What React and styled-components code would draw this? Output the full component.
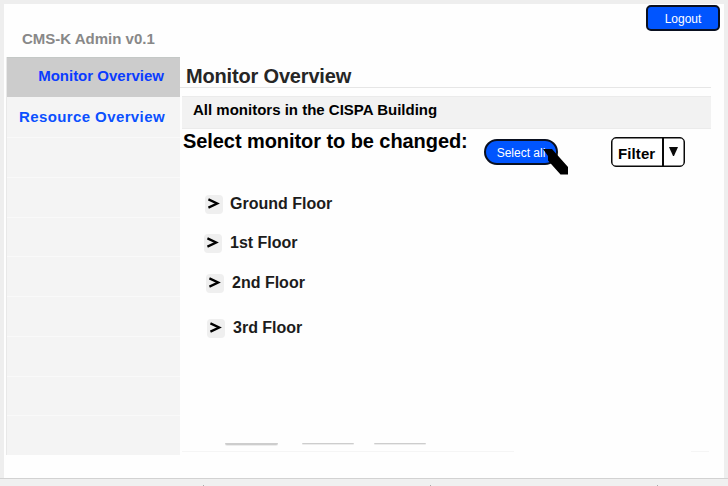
import React from "react";
import styled, { createGlobalStyle } from "styled-components";

const GlobalStyle = createGlobalStyle`
  * { box-sizing: border-box; }
  body { margin: 0; background: #eeeeee; font-family: "Liberation Sans", Arial, sans-serif; }
`;

const Page = styled.div`
  width: 728px;
  height: 486px;
  padding-top: 4px;
  display: flex;
  flex-direction: column;
  overflow: hidden;
  background: #eeeeee;
`;

const Window = styled.div`
  margin: 0 4px;
  height: 474px;
  background: #fefefe;
`;

const Header = styled.header`
  height: 53px;
  display: flex;
  justify-content: space-between;
  align-items: flex-start;
  padding: 0 4px 0 18px;
`;

const AppName = styled.div`
  margin-top: 25px;
  font-weight: bold;
  font-size: 15px;
  line-height: 20px;
  color: #888888;
`;

const Button = styled.button`
  width: 74px;
  height: 26px;
  padding: 2px 0 0;
  border: 2px solid #0a1020;
  border-radius: ${(p) => (p.$pill ? "13px" : "5px")};
  background: #0055ff;
  color: #ffffff;
  font: 12px/20px "Liberation Sans", Arial, sans-serif;
  white-space: nowrap;
`;

const LogoutButton = styled(Button)`
  margin-top: 1px;
`;

const Body = styled.div`
  display: flex;
  padding-left: 2px;
`;

const Sidebar = styled.nav`
  width: 174px;
  height: 398px;
  display: grid;
  grid-template-rows: 40px 40px repeat(8, 1fr);
  background: #f4f4f4;
  border-left: 1px solid #e8e8e8;
`;

const NavItem = styled.div`
  padding-right: ${(p) => (p.$active ? 16 : 15)}px;
  text-align: right;
  font-weight: bold;
  font-size: 15px;
  line-height: ${(p) => (p.$active ? "36px" : "40px")};
  letter-spacing: ${(p) => (p.$active ? "0" : "0.4px")};
  color: ${(p) => (p.$active ? "#0a3cff" : "#0a50ff")};
  background: ${(p) => (p.$active ? "#cccccc" : "transparent")};
  border-top: ${(p) => (p.$active ? "1px solid #c4c8c6" : "0")};
`;

const EmptyItem = styled.div`
  border-top: 1px solid #f9f9f9;
`;

const Main = styled.main`
  flex: 1;
  height: 398px;
  display: flex;
  flex-direction: column;
`;

const Title = styled.h1`
  margin: 0 13px 0 0;
  height: 31px;
  padding: 4px 0 0 6px;
  border-bottom: 1px solid #e6e6e6;
  font-size: 20px;
  line-height: 30px;
  letter-spacing: -0.17px;
  color: #262626;
`;

const Banner = styled.div`
  margin: 8px 13px 0 2px;
  height: 33px;
  padding-left: 11px;
  border: solid #ebebeb;
  border-width: 1px 0;
  background: #f2f2f2;
  font-weight: bold;
  font-size: 15px;
  line-height: 25px;
  color: #000000;
`;

const Toolbar = styled.div`
  height: 47px;
  display: flex;
  align-items: flex-start;
  padding-left: 3px;
`;

const Prompt = styled.h2`
  margin: 0;
  width: 301px;
  font-size: 20px;
  line-height: 24px;
  letter-spacing: -0.07px;
  white-space: nowrap;
  color: #000000;
`;

const SelectAll = styled.div`
  position: relative;
  width: 127px;
  padding-top: 10px;
`;

const Pointer = styled.svg`
  position: absolute;
  left: 58px;
  top: 19px;
  width: 28px;
  height: 28px;
`;

const Filter = styled.div`
  display: flex;
  width: 74px;
  height: 30px;
  margin-top: 8px;
  border: 1.5px solid #0a0a0a;
  border-radius: 5px;
  background: #ffffff;
  box-shadow: inset 0 0 0 0.5px #0a0a0a;
`;

const FilterLabel = styled.span`
  width: 52px;
  padding-left: 6px;
  border-right: 2px solid #0a0a0a;
  font-weight: bold;
  font-size: 15px;
  line-height: 32px;
  letter-spacing: 0.1px;
`;

const Caret = styled.svg`
  width: 9px;
  height: 9px;
  margin: 9px 0 0 5px;
`;

const FloorList = styled.div`
  height: 267px;
  padding-top: 19px;
`;

const Floor = styled.div`
  display: flex;
  align-items: flex-start;
  height: 19px;
  margin: 0 0 ${(p) => p.$gap}px ${(p) => p.$indent}px;
  font-weight: bold;
  font-size: 16px;
  line-height: 17px;
  color: #1c1c1c;
`;

const Expander = styled.span`
  width: 18px;
  height: 19px;
  padding: 3px 0 0 3px;
  border-radius: 4px;
  background: #efefef;
`;

const Chevron = styled.svg`
  display: block;
  width: 12px;
  height: 12px;
`;

const FloorName = styled.span`
  padding-left: ${(p) => (p.$nudge ? 8 : 7)}px;
`;

const CardEdges = styled.div`
  display: flex;
  height: 8px;
  padding: 0 0 0 45px;
`;

const CardEdge = styled.div`
  width: ${(p) => p.$width}px;
  height: ${(p) => (p.$strong ? 2 : 1)}px;
  margin-right: ${(p) => p.$after || 0}px;
  background: #cdcdcd;
  border-radius: 0 0 3px 3px;
  box-shadow: 0 1px 0 0 #ececec;
`;

const BottomRule = styled.div`
  display: flex;
  justify-content: space-between;
  margin: 0 15px 0 2px;
`;

const Rule = styled.div`
  width: ${(p) => p.$width}px;
  height: 1px;
  background: #f5f5f5;
`;

const StatusBar = styled.footer`
  height: 8px;
  border-top: 1px solid #d2d2d2;
  background: #f0f0f0;
  display: grid;
  grid-template-columns: 203px 227px 227px;
  align-items: end;
`;

const Tick = styled.i`
  justify-self: end;
  width: 1px;
  height: 1px;
  margin-right: -1px;
  background: #aaaaaa;
`;

const floors = [
  { name: "Ground Floor", indent: 25, gap: 20 },
  { name: "1st Floor", indent: 24, nudge: true, gap: 21 },
  { name: "2nd Floor", indent: 26, nudge: true, gap: 26 },
  { name: "3rd Floor", indent: 27, nudge: true, gap: 0 },
];

export default function App() {
  return (
    <Page>
      <GlobalStyle />
      <Window>
        <Header>
          <AppName>CMS-K Admin v0.1</AppName>
          <LogoutButton>Logout</LogoutButton>
        </Header>
        <Body>
          <Sidebar>
            <NavItem $active>Monitor Overview</NavItem>
            <NavItem>Resource Overview</NavItem>
            {Array.from({ length: 8 }, (_, i) => (
              <EmptyItem key={i} />
            ))}
          </Sidebar>
          <Main>
            <Title>Monitor Overview</Title>
            <Banner>All monitors in the CISPA Building</Banner>
            <Toolbar>
              <Prompt>Select monitor to be changed:</Prompt>
              <SelectAll>
                <Button $pill>Select all</Button>
                <Pointer viewBox="0 0 28 28">
                  <path d="M1 1H10L26 19V26.5H18.5L6 12.5V8Z" fill="#000" />
                </Pointer>
              </SelectAll>
              <Filter>
                <FilterLabel>Filter</FilterLabel>
                <Caret viewBox="0 0 9 9">
                  <path d="M0 0H9L5 9H4Z" fill="#0a0a0a" />
                </Caret>
              </Filter>
            </Toolbar>
            <FloorList>
              {floors.map((f) => (
                <Floor key={f.name} $indent={f.indent} $gap={f.gap}>
                  <Expander>
                    <Chevron viewBox="0 0 12 12">
                      <path d="M0.4 1.3L9.2 5.5L0.4 9.7" fill="none" stroke="#000" strokeWidth="2.3" />
                    </Chevron>
                  </Expander>
                  <FloorName $nudge={f.nudge}>{f.name}</FloorName>
                </Floor>
              ))}
            </FloorList>
            <CardEdges>
              <CardEdge $width={53} $after={24} $strong />
              <CardEdge $width={52} $after={20} />
              <CardEdge $width={52} />
            </CardEdges>
            <BottomRule>
              <Rule $width={332} />
              <Rule $width={18} />
            </BottomRule>
          </Main>
        </Body>
      </Window>
      <StatusBar>
        <Tick />
        <Tick />
        <Tick />
      </StatusBar>
    </Page>
  );
}
